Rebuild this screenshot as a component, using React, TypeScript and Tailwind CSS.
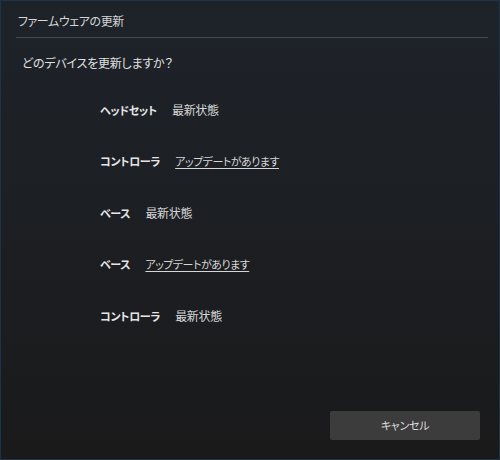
const devices = [
  { name: "ヘッドセット", update: false },
  { name: "コントローラ", update: true },
  { name: "ベース", update: false },
  { name: "ベース", update: true },
  { name: "コントローラ", update: false },
];

export default function App() {
  return (
    <div
      className="flex flex-col w-[500px] h-[460px] border border-[#1d3348] bg-gradient-to-b from-[#1e232a] to-[#1a1a1b] text-[12px] text-[#d6d6d6] [font-feature-settings:'palt']"
      style={{ fontFamily: '"Noto Sans CJK JP", "Noto Sans", sans-serif' }}
    >
      <div className="ml-[15px] mr-[11px] h-[37px] border-b border-[#4a4a4a] flex items-center pl-[2px] pt-[3px]">
        <span className="leading-[16px] tracking-[-0.4px]">ファームウェアの更新</span>
      </div>

      <div className="pl-[21px] mt-[16px] leading-[18px] text-[#e0e0e0] tracking-[-0.2px]">どのデバイスを更新しますか？</div>

      <div className="mt-[12px] pl-[99px] flex flex-col text-[11px]">
        {devices.map((d, i) => (
          <div key={i} className="h-[51.5px] flex items-center gap-[15px]">
            <span className="font-bold text-[#e6e6e6] tracking-[-0.3px]">{d.name}</span>
            {d.update ? (
              <a className="underline underline-offset-[2px] cursor-pointer text-[#d6d6d6] tracking-[-0.5px]">アップデートがあります</a>
            ) : (
              <span className="text-[12px] tracking-[-0.3px]">最新状態</span>
            )}
          </div>
        ))}
      </div>

      <div className="mt-auto flex justify-end pr-[19px] pb-[19px]">
        <button className="w-[150px] h-[29px] rounded-[2px] bg-[#3c3c3c] text-[#dcdcdc] text-[11px] tracking-[-0.3px]">
          キャンセル
        </button>
      </div>
    </div>
  );
}
